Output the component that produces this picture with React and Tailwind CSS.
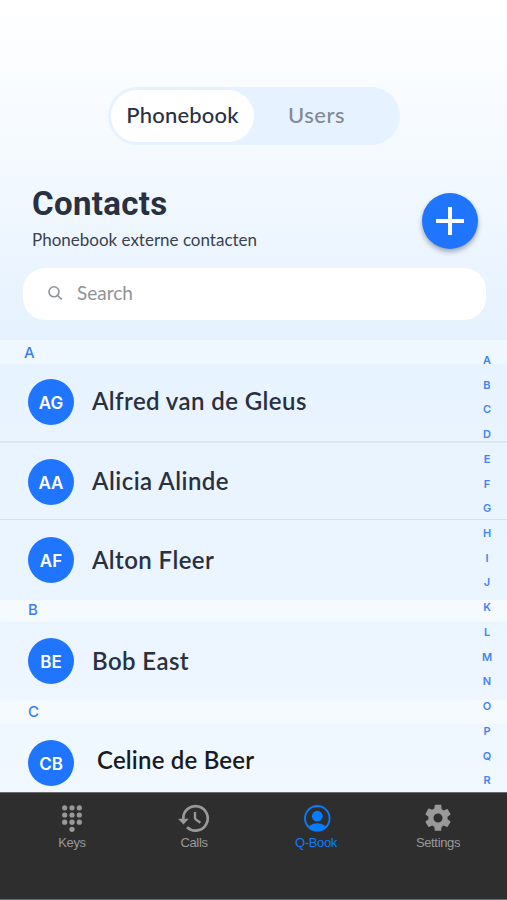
import React from 'react';

const INDEX = 'ABCDEFGHIJKLMNOPQR'.split('');

function Band({ letter, className }) {
  return (
    <div className={`flex items-center font-['Inter',sans-serif] text-[15px] font-medium leading-none text-[#3b7df0] ${className}`}>
      {letter}
    </div>
  );
}

function Row({ initials, name, className, nameClass }) {
  return (
    <div className={`flex items-start pl-7 ${className}`}>
      <div className="flex size-[46px] shrink-0 items-center justify-center rounded-full bg-[#1f75fe] pt-[3px] font-['Inter',sans-serif] text-[17px] font-semibold leading-none text-white">
        {initials}
      </div>
      <div className={`whitespace-nowrap font-['Lato',sans-serif] text-[24px] font-semibold ${nameClass}`}>{name}</div>
    </div>
  );
}

function KeysIcon() {
  const dots = [];
  for (let r = 0; r < 3; r++) for (let c = 0; c < 3; c++) dots.push([6.7 + c * 7.3, 3.8 + r * 7.2]);
  dots.push([14, 25.3]);
  return (
    <svg className="size-7" viewBox="0 0 28 28" fill="currentColor">
      {dots.map(([x, y]) => <circle key={`${x}-${y}`} cx={x} cy={y} r="2.6" />)}
    </svg>
  );
}

function CallsIcon() {
  return (
    <svg className="h-7 w-8" viewBox="0 0 32 28" fill="none" stroke="currentColor" strokeWidth="2.7">
      <path d="M5.3 15.5V14.3A12.2 12.2 0 1 1 9.1 23.2" />
      <path d="M0 14.8H10.8L5.4 20.6Z" fill="currentColor" stroke="none" />
      <path d="M17 8V14.4Q17.2 15.2 22.4 18.8" strokeWidth="2.3" />
    </svg>
  );
}

function BookIcon() {
  return (
    <svg className="ml-[2px] size-7" viewBox="0 0 28 28">
      <defs><clipPath id="ring"><circle cx="14.3" cy="14.3" r="12.5" /></clipPath></defs>
      <circle cx="14.3" cy="14.3" r="12.3" fill="none" stroke="currentColor" strokeWidth="1.9" />
      <circle cx="14.3" cy="12.2" r="5.4" fill="currentColor" />
      <ellipse cx="14.3" cy="25.8" rx="10" ry="6.6" fill="currentColor" clipPath="url(#ring)" />
    </svg>
  );
}

function SettingsIcon() {
  return (
    <svg className="-m-[2px] size-8" viewBox="0 0 24 24" fill="currentColor">
      <path d="M19.14 12.94c.04-.3.06-.61.06-.94 0-.32-.02-.64-.07-.94l2.03-1.58a.49.49 0 0 0 .12-.61l-1.92-3.32a.49.49 0 0 0-.59-.22l-2.39.96c-.5-.38-1.03-.7-1.62-.94l-.36-2.54A.48.48 0 0 0 13.92 2h-3.84c-.24 0-.43.17-.47.41l-.36 2.54c-.59.24-1.13.57-1.62.94l-2.39-.96a.48.48 0 0 0-.59.22L2.74 8.87a.47.47 0 0 0 .12.61l2.03 1.58c-.05.3-.09.63-.09.94s.02.64.07.94l-2.03 1.58a.49.49 0 0 0-.12.61l1.92 3.32c.12.22.37.29.59.22l2.39-.96c.5.38 1.03.7 1.62.94l.36 2.54c.05.24.24.41.48.41h3.84c.24 0 .44-.17.47-.41l.36-2.54c.59-.24 1.13-.56 1.62-.94l2.39.96c.22.08.47 0 .59-.22l1.92-3.32a.47.47 0 0 0-.12-.61l-2.01-1.58zM12 15.4A3.4 3.4 0 1 1 12 8.6a3.4 3.4 0 0 1 0 6.8z" />
    </svg>
  );
}

function Tab({ icon, label, active }) {
  return (
    <div className={`flex w-[122px] flex-col items-center ${active ? 'text-[#087dfc]' : 'text-[#999999]'}`}>
      {icon}
      <span className="mt-[3px] font-['Liberation_Sans',sans-serif] text-[13px] leading-[15px] tracking-[-0.35px]">{label}</span>
    </div>
  );
}

export default function App() {
  return (
    <div className="flex h-[900px] w-[507px] flex-col overflow-hidden bg-white font-['Lato',sans-serif] text-[#29303f]">
      <header className="h-[340px] bg-linear-to-b from-white via-[#f3f9ff] via-50% to-[#e5f1fe] pt-[87px]">
        <div className="ml-[108px] flex h-[58px] w-[292px] rounded-full bg-[#e6f2ff] p-[3px]">
          <div className="flex h-[52px] w-[143px] justify-center rounded-full bg-white text-[22px] font-medium leading-[50px] tracking-[0.2px]">Phonebook</div>
          <div className="ml-[34px] text-[22px] font-medium leading-[50px] tracking-[0.5px] text-[#838994]">Users</div>
        </div>
        <div className="flex h-[123px] justify-between pl-8 pr-[29px]">
          <div className="pt-10">
            <h1 className="font-['Roboto',sans-serif] text-[33px] font-bold leading-[38px] tracking-[0.35px]">Contacts</h1>
            <p className="mt-[6px] text-[17px] leading-[22px] text-[#3a4250]">Phonebook externe contacten</p>
          </div>
          <button className="mt-[48px] flex size-14 items-center justify-center rounded-full bg-[#1f75fe] shadow-[0_3px_5px_rgba(40,50,70,0.4)]">
            <svg className="size-7" viewBox="0 0 28 28" stroke="white" strokeWidth="4"><path d="M14 0V28M0 14H28" /></svg>
          </button>
        </div>
        <div className="ml-[23px] flex h-[52px] w-[463px] items-center rounded-[22px] bg-white pl-[25px] text-[#8f9298]">
          <svg className="-mt-[2px] size-[15px]" viewBox="0 0 15 15" fill="none" stroke="currentColor" strokeWidth="1.6"><circle cx="6" cy="5.8" r="5" /><path d="M9.6 9.5L13.8 13.3" /></svg>
          <span className="-mt-[2px] ml-[14px] text-[19px] leading-[50px]">Search</span>
        </div>
      </header>

      <main className="relative h-[452px] shrink-0 overflow-hidden bg-linear-to-b from-[#e7f3ff] via-[#ebf5ff] via-60% to-[#f1f8ff]">
        <Band letter="A" className="h-6 bg-[#f0f8ff] pl-6" />
        <Row initials="AG" name="Alfred van de Gleus" className="h-[79px] border-b-2 border-[#dbe6f2] pt-[15px]" nameClass="ml-[18px] leading-[44px] tracking-[0.42px]" />
        <Row initials="AA" name="Alicia Alinde" className="h-[77px] border-b border-[#d6e0ec] pt-4" nameClass="ml-[18px] leading-[44px] tracking-[0.48px]" />
        <Row initials="AF" name="Alton Fleer" className="h-20 pt-[17px]" nameClass="ml-[18px] leading-[46px] tracking-[0.42px]" />
        <Band letter="B" className="h-[22px] bg-[#f5faff] pb-[3px] pl-7" />
        <Row initials="BE" name="Bob East" className="h-[78px] pt-4" nameClass="ml-[18px] leading-[46px] tracking-[0.4px]" />
        <Band letter="C" className="h-6 bg-[#f5faff] pb-[2px] pl-7" />
        <Row initials="CB" name="Celine de Beer" className="h-[68px] pt-4" nameClass="ml-[23px] leading-[40px] tracking-[0.2px] text-[#181b21]" />
        <div className="absolute right-[10px] top-[8px] flex w-5 flex-col font-['Inter',sans-serif] text-[11px] font-semibold text-[#4583f2]">
          {INDEX.map((l) => <span key={l} className="h-[24.72px] text-center leading-[24.72px]">{l}</span>)}
        </div>
      </main>

      <nav className="flex h-[108px] shrink-0 justify-center border-y border-[#6a6c6e] bg-[#2e2e2e] pl-[3px] pt-[11px]">
        <Tab icon={<KeysIcon />} label="Keys" />
        <Tab icon={<CallsIcon />} label="Calls" />
        <Tab icon={<BookIcon />} label="Q-Book" active />
        <Tab icon={<SettingsIcon />} label="Settings" />
      </nav>
    </div>
  );
}
